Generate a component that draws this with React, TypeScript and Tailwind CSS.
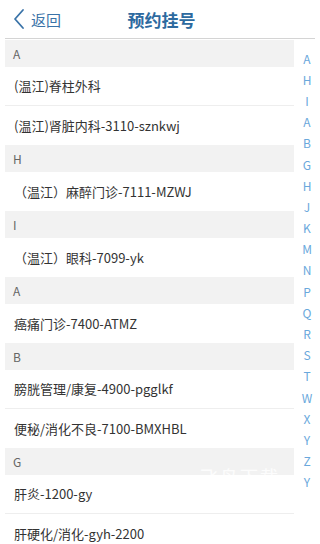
import React from "react";

type Section = { title: string; items: string[] };

const sections: Section[] = [
  { title: "A", items: ["(温江)脊柱外科", "(温江)肾脏内科-3110-sznkwj"] },
  { title: "H", items: ["（温江）麻醉门诊-7111-MZWJ"] },
  { title: "I", items: ["（温江）眼科-7099-yk"] },
  { title: "A", items: ["癌痛门诊-7400-ATMZ"] },
  { title: "B", items: ["膀胱管理/康复-4900-pgglkf", "便秘/消化不良-7100-BMXHBL"] },
  { title: "G", items: ["肝炎-1200-gy", "肝硬化/消化-gyh-2200"] },
];

const letters = ["A", "H", "I", "A", "B", "G", "H", "J", "K", "M", "N", "P", "Q", "R", "S", "T", "W", "X", "Y", "Z", "Y"];

export default function App() {
  return (
    <div
      className="relative w-[320px] h-[544px] overflow-hidden bg-white"
      style={{ fontFamily: '"Noto Sans CJK SC", "Noto Sans", sans-serif' }}
    >
      <div className="relative h-[38px] flex items-center">
        <div className="flex items-center pl-[12px]">
          <svg width="14" height="22" viewBox="0 0 14 22" fill="none">
            <path d="M11 2 L3 11 L11 20" stroke="#3a73a8" strokeWidth="1.8" strokeLinecap="round" strokeLinejoin="round" />
          </svg>
          <span className="ml-[5px] text-[15px] leading-none text-[#3a73a8]">返回</span>
        </div>
        <div className="absolute left-0 right-0 top-0 h-[38px] flex items-center justify-center pointer-events-none">
          <span className="ml-[3px] text-[17px] font-bold leading-none text-[#2d6a9f]">预约挂号</span>
        </div>
      </div>
      <div className="mx-[5px] h-px bg-[#d4d4d4]" />
      <div className="flex pt-px">
        <div className="ml-[5px] w-[289px] flex flex-col">
          {sections.map((s, si) => (
            <div key={si} className="flex flex-col">
              <div className="h-[27px] bg-[#f2f2f2] flex items-center pl-[8px] text-[12px] text-[#666666]">
                {s.title}
              </div>
              {s.items.map((it, ii) => (
                <div
                  key={ii}
                  className={
                    "h-[39px] flex items-center pl-[9px] text-[13px] text-[#333333] " +
                    (ii < s.items.length - 1 ? "border-b border-[#eeeeee]" : "")
                  }
                >
                  {it}
                </div>
              ))}
            </div>
          ))}
        </div>
        <div className="flex-1 flex flex-col items-center pt-[8px]">
          {letters.map((l, i) => (
            <div key={i} className="h-[21.2px] flex items-center justify-center text-[12px] leading-none text-[#6aa8dc]">
              {l}
            </div>
          ))}
        </div>
      </div>
      <div className="absolute left-[200px] top-[467px] text-[18px] tracking-[2px] text-white/80 leading-none pointer-events-none">
        飞鸟下载
      </div>
    </div>
  );
}
